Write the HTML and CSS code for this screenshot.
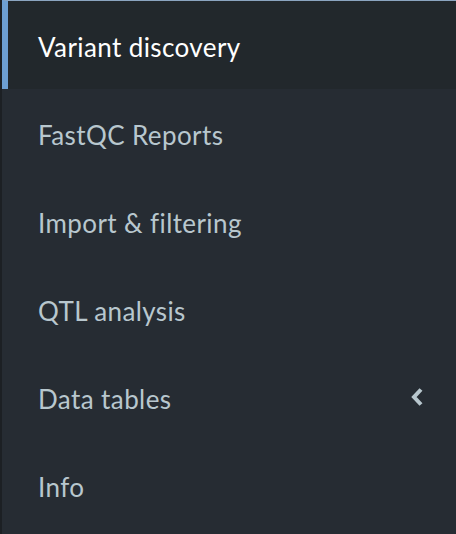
FILE: index.html
```html
<!DOCTYPE html>
<html>
<head>
<meta charset="utf-8">
<link rel="stylesheet" href="styles.css">
</head>
<body>
<ul class="sidebar-menu">
  <li class="item active"><a class="link"><span class="label">Variant discovery</span></a></li>
  <li class="item"><a class="link"><span class="label">FastQC Reports</span></a></li>
  <li class="item"><a class="link"><span class="label">Import &amp; filtering</span></a></li>
  <li class="item"><a class="link"><span class="label">QTL analysis</span></a></li>
  <li class="item treeview"><a class="link"><span class="label">Data tables</span>
    <svg class="chevron" width="14" height="18" viewBox="0 0 14 18"><path d="M11 1.5 L4 9 L11 16.5" fill="none" stroke="#b8c7ce" stroke-width="4" stroke-linecap="butt" stroke-linejoin="miter"/></svg>
  </a></li>
  <li class="item"><a class="link"><span class="label">Info</span></a></li>
</ul>
</body>
</html>
```
FILE: styles.css
```css
html, body {
  margin: 0;
  padding: 0;
  height: 100%;
}
body {
  background: #262c33;
  border-left: 2px solid #1c2024;
  box-sizing: border-box;
  font-family: "Lato", "Noto Sans", sans-serif;
  font-variant-ligatures: none;
}
.sidebar-menu {
  list-style: none;
  margin: 0;
  padding: 0;
}
.item {
  margin: 0;
}
.link {
  display: flex;
  align-items: center;
  height: 85px;
  padding-top: 3px;
  padding-left: 30px;
  border-left: 6px solid transparent;
  color: #b8c7ce;
  font-size: 26px;
  letter-spacing: 0.4px;
  position: relative;
}
.active .link {
  background: #22282c;
  border-left-color: #6d9fd2;
  border-top: 1px solid #8ba5c0;
  color: #ffffff;
}
.chevron {
  position: absolute;
  right: 32px;
  top: 35px;
}
```
